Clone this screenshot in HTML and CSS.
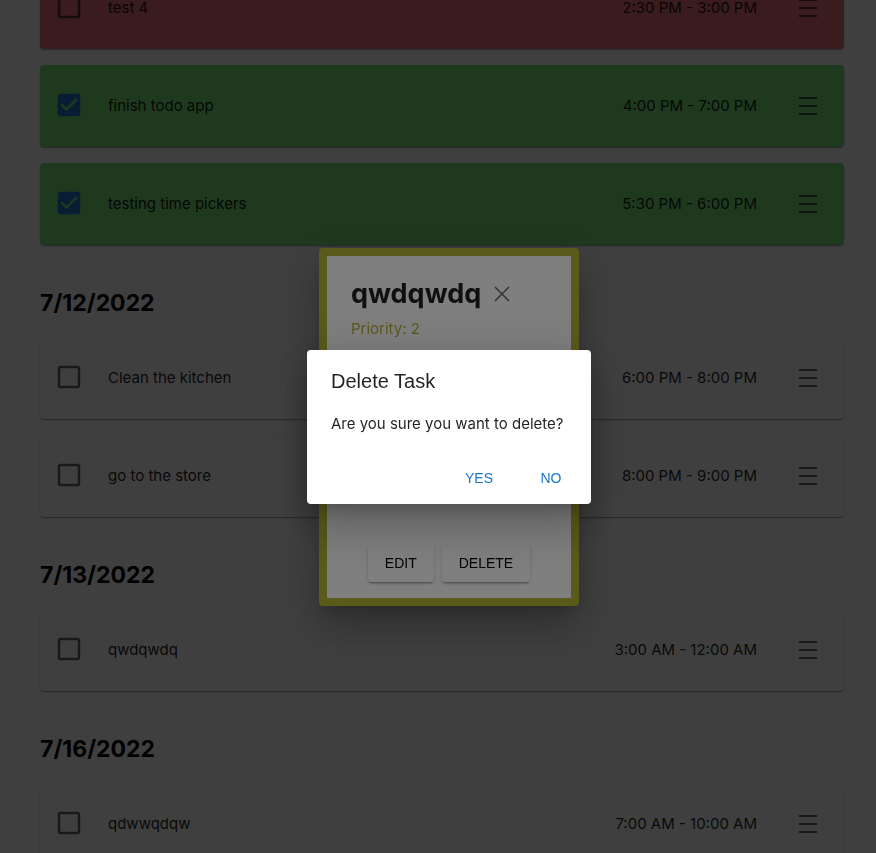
FILE: index.html
```html
<!DOCTYPE html>
<html lang="en">
<head>
<meta charset="utf-8">
<meta name="viewport" content="width=device-width, initial-scale=1">
<title>Todo</title>
<link rel="stylesheet" href="styles.css">
</head>
<body>
<svg class="sprite" aria-hidden="true">
  <symbol id="box" viewBox="0 0 24 24"><path d="M19 5v14H5V5h14m0-2H5c-1.1 0-2 .9-2 2v14c0 1.1.9 2 2 2h14c1.1 0 2-.9 2-2V5c0-1.1-.9-2-2-2z"/></symbol>
  <symbol id="box-checked" viewBox="0 0 24 24"><path d="M19 3H5c-1.11 0-2 .9-2 2v14c0 1.1.89 2 2 2h14c1.11 0 2-.9 2-2V5c0-1.1-.89-2-2-2zm-9 14l-5-5 1.41-1.41L10 14.17l7.59-7.59L19 8l-9 9z"/></symbol>
  <symbol id="menu" viewBox="0 0 24 24"><path d="M3 3h18v2H3zM3 11h18v2H3zM3 19h18v2H3z"/></symbol>
</svg>

<main class="tasks">
  <section class="day">
    <div class="task task-late">
      <span class="check"><input type="checkbox" id="t1"><svg><use href="#box"/></svg></span>
      <label class="name" for="t1">test 4</label>
      <span class="time">2:30 PM - 3:00 PM</span>
      <button class="menu" aria-label="Open task"><svg><use href="#menu"/></svg></button>
    </div>
    <div class="task task-done">
      <span class="check"><input type="checkbox" id="t2" checked><svg><use href="#box-checked"/></svg></span>
      <label class="name" for="t2">finish todo app</label>
      <span class="time">4:00 PM - 7:00 PM</span>
      <button class="menu" aria-label="Open task"><svg><use href="#menu"/></svg></button>
    </div>
    <div class="task task-done">
      <span class="check"><input type="checkbox" id="t3" checked><svg><use href="#box-checked"/></svg></span>
      <label class="name" for="t3">testing time pickers</label>
      <span class="time">5:30 PM - 6:00 PM</span>
      <button class="menu" aria-label="Open task"><svg><use href="#menu"/></svg></button>
    </div>
  </section>
  <section class="day">
    <h2>7/12/2022</h2>
    <div class="task">
      <span class="check"><input type="checkbox" id="t4"><svg><use href="#box"/></svg></span>
      <label class="name" for="t4">Clean the kitchen</label>
      <span class="time">6:00 PM - 8:00 PM</span>
      <button class="menu" aria-label="Open task"><svg><use href="#menu"/></svg></button>
    </div>
    <div class="task">
      <span class="check"><input type="checkbox" id="t5"><svg><use href="#box"/></svg></span>
      <label class="name" for="t5">go to the store</label>
      <span class="time">8:00 PM - 9:00 PM</span>
      <button class="menu" aria-label="Open task"><svg><use href="#menu"/></svg></button>
    </div>
  </section>
  <section class="day">
    <h2>7/13/2022</h2>
    <div class="task">
      <span class="check"><input type="checkbox" id="t6"><svg><use href="#box"/></svg></span>
      <label class="name" for="t6">qwdqwdq</label>
      <span class="time">3:00 AM - 12:00 AM</span>
      <button class="menu" aria-label="Open task"><svg><use href="#menu"/></svg></button>
    </div>
  </section>
  <section class="day">
    <h2>7/16/2022</h2>
    <div class="task">
      <span class="check"><input type="checkbox" id="t7"><svg><use href="#box"/></svg></span>
      <label class="name" for="t7">qdwwqdqw</label>
      <span class="time">7:00 AM - 10:00 AM</span>
      <button class="menu" aria-label="Open task"><svg><use href="#menu"/></svg></button>
    </div>
  </section>
</main>

<div class="backdrop">
  <div class="card" role="dialog" aria-labelledby="card-title">
    <header class="card-head">
      <h1 id="card-title">qwdqwdq</h1>
      <button class="close" aria-label="Close"><svg viewBox="0 0 16 16"><path d="M1 1l14 14M15 1L1 15"/></svg></button>
    </header>
    <p class="priority">Priority: 2</p>
    <p class="date">7/13/2022</p>
    <div class="card-actions">
      <button class="raised">EDIT</button>
      <button class="raised">DELETE</button>
    </div>
  </div>
</div>

<div class="backdrop">
  <div class="confirm" role="alertdialog" aria-labelledby="confirm-title" aria-describedby="confirm-text">
    <h2 id="confirm-title">Delete Task</h2>
    <p id="confirm-text">Are you sure you want to delete?</p>
    <div class="confirm-actions">
      <button class="flat">YES</button>
      <button class="flat">NO</button>
    </div>
  </div>
</div>
</body>
</html>
```
FILE: styles.css
```css
* { box-sizing: border-box; }

body {
  margin: 0;
  height: 100vh;
  overflow: hidden;
  background: #fff;
  color: #000;
  font: 15px/24px Inter, "Liberation Sans", sans-serif;
}

h1, h2, p { margin: 0; }

button {
  border: 0;
  padding: 0;
  background: none;
  font: 14px/24px "Liberation Sans", Arial, sans-serif;
}

svg { display: block; fill: currentColor; }

.sprite { position: absolute; width: 0; height: 0; }

/* The list is scrolled part-way through its first row. */
.tasks { margin-top: -33px; padding: 0 32px 0 40px; }

.day h2 {
  margin: 44px 0 20px;
  font-size: 23px;
  line-height: 28px;
  font-weight: 700;
}

.task {
  display: flex;
  align-items: center;
  height: 82px;
  padding: 0 24px 0 14px;
  border-radius: 4px;
  background: #fff;
  color: rgba(0, 0, 0, 0.87);
  box-shadow: 0 2px 1px -1px rgba(0, 0, 0, 0.2), 0 1px 1px rgba(0, 0, 0, 0.14), 0 1px 3px rgba(0, 0, 0, 0.12);
}

.task + .task { margin-top: 16px; }
.task-late { background: #e87078; }
.task-done { background: #7ce47c; }

.check {
  position: relative;
  margin-right: 24px;
  margin-bottom: 2px;
  color: rgba(0, 0, 0, 0.6);
}

.check svg { width: 30px; height: 30px; }
.task-done .check { color: #1976d2; }

.check input {
  position: absolute;
  inset: 0;
  width: 100%;
  height: 100%;
  margin: 0;
  opacity: 0;
}

.name { flex: 1; }
.time { margin-right: 39px; }
.menu { color: rgba(0, 0, 0, 0.6); }
.menu svg { width: 24px; height: 24px; }

.backdrop {
  position: fixed;
  inset: 0;
  display: flex;
  align-items: center;
  justify-content: center;
  padding-left: 22px;
  background: rgba(0, 0, 0, 0.5);
}

.card, .confirm {
  border-radius: 4px;
  background: #fff;
  color: rgba(0, 0, 0, 0.87);
  box-shadow: 0 11px 15px -7px rgba(0, 0, 0, 0.2), 0 24px 38px 3px rgba(0, 0, 0, 0.14), 0 9px 46px 8px rgba(0, 0, 0, 0.12);
}

.card {
  display: flex;
  flex-direction: column;
  width: 260px;
  height: 358px;
  padding: 20px 24px 16px;
  border: 8px solid #b4b436;
}

.card-head { display: flex; align-items: center; gap: 13px; }
.card-head h1 { font-size: 27px; line-height: 36px; }
.close { color: rgba(0, 0, 0, 0.6); }
.close svg { width: 16px; height: 16px; fill: none; stroke: currentColor; stroke-width: 1.5; }
.priority { margin-top: 5px; color: #b4b436; }
.date { margin-top: 6px; font-size: 20px; }

.card-actions {
  display: flex;
  justify-content: center;
  gap: 8px;
  margin-top: auto;
}

.raised {
  padding: 6px 17px 7px;
  border-radius: 4px;
  background: #fff;
  box-shadow: 0 3px 1px -2px rgba(0, 0, 0, 0.2), 0 2px 2px rgba(0, 0, 0, 0.14), 0 1px 5px rgba(0, 0, 0, 0.12);
}

.confirm { min-width: 284px; }

.confirm h2 {
  padding: 16px 24px;
  font: 20px/30px "Liberation Sans", Arial, sans-serif;
}

.confirm p { padding: 0 24px 16px; }

.confirm-actions {
  display: flex;
  justify-content: flex-end;
  gap: 8px;
  padding: 8px;
}

.flat { min-width: 64px; padding: 6px 8px; color: #1976d2; }
```
